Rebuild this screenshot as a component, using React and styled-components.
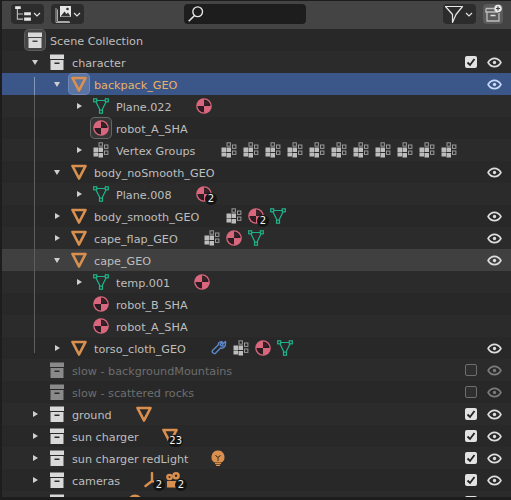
import React from 'react';
import styled, { createGlobalStyle } from 'styled-components';

const ORANGE = '#d98f4e';
const GREEN = '#1fb389';
const PINK = '#d8667c';

const CollectionIcon = ({ color = '#d9d9d9' }) => (
  <Svg viewBox="0 0 16 16">
    <path d="M1 .5h14v4.500H1z" fill={color} />
    <path fillRule="evenodd" d="M1.500 6H14.500V16H1.500zM5.500 8.500v1.500h5V8.500z" fill={color} />
  </Svg>
);

const MeshIcon = () => (
  <Svg viewBox="0 0 16 16">
    <path d="M1.500 2h13L8 14.500z" fill="none" stroke={ORANGE} strokeWidth="2.700" strokeLinejoin="round" />
  </Svg>
);

const MeshDataIcon = () => (
  <Svg viewBox="0 0 16 16" fill="none" stroke={GREEN} strokeWidth="1.200">
    <path d="M3.500 2.500h9M3 4l4 8M13 4l-4 8" />
    <rect x="0.700" y="0.800" width="3" height="3" />
    <rect x="12.300" y="0.800" width="3" height="3" />
    <rect x="6.500" y="12.200" width="3" height="3" />
  </Svg>
);

const MaterialIcon = () => (
  <Svg viewBox="0 0 16 16">
    <circle cx="8" cy="8" r="7.800" fill={PINK} />
    <path d="M8 1.500A6.500 6.500 0 0 1 14.500 8H8zM8 8v6.500A6.500 6.500 0 0 1 1.500 8z" fill="#2a1c20" />
    <path d="M8 2.500A5.500 5.500 0 0 1 13 6L8 7z" fill="#3a2328" />
  </Svg>
);

const VertexGroupIcon = () => (
  <Svg viewBox="0 0 16 16">
    <g fill="#bdbdbd">
      <rect x="0.500" y="5.500" width="4.500" height="4.500" />
      <rect x="0.500" y="10.500" width="4.500" height="4" />
      <rect x="5.500" y="5.500" width="4.500" height="4.500" />
      <rect x="5.500" y="11" width="4.500" height="4.500" />
    </g>
    <g fill="none" stroke="#9a9a9a" strokeWidth="1">
      <rect x="6" y="0.800" width="3.400" height="3.400" />
      <rect x="11.500" y="3" width="3.400" height="3.400" />
      <rect x="11.500" y="9" width="3.400" height="3.400" />
    </g>
  </Svg>
);

const WrenchIcon = () => (
  <Svg viewBox="0 0 16 16">
    <path
      d="M14.500 1.500l-2.800 2.600.4 1.700-1.800.2-1.200-1.200 2.400-2.800c-2-.8-4.500.6-4.300 3.100L1.500 10.500c-1.200 1.500 1.800 4.100 3 2.700l5-5.200c2.800 1 5.600-1.500 5-6.500z"
      fill="none"
      stroke="#5c87c9"
      strokeWidth="1.400"
      strokeLinejoin="round"
    />
  </Svg>
);

const BulbIcon = () => (
  <Svg viewBox="0 0 16 16">
    <path d="M8 .5a6.500 6.500 0 0 0-3.500 12h7A6.500 6.500 0 0 0 8 .5z" fill={ORANGE} />
    <rect x="5" y="13" width="6" height="1.200" fill={ORANGE} />
    <rect x="6" y="14.800" width="4" height="1.200" fill={ORANGE} />
    <path d="M5.500 5l1.500 2h2l1.500-2M8 7v4" fill="none" stroke="#4a3220" strokeWidth="1" />
  </Svg>
);

const EmptyIcon = () => (
  <Svg viewBox="0 0 16 16">
    <path d="M8 1V9M8 9l-6.500 5M8 9l7 3.500" fill="none" stroke={ORANGE} strokeWidth="2.400" strokeLinecap="round" />
  </Svg>
);

const CameraIcon = () => (
  <Svg viewBox="0 0 16 16">
    <circle cx="3.500" cy="5" r="3.300" fill={ORANGE} />
    <circle cx="10" cy="3.800" r="3.800" fill={ORANGE} />
    <circle cx="3.500" cy="5" r="1" fill="#3a2a1c" />
    <circle cx="10" cy="3.800" r="1.200" fill="#3a2a1c" />
    <path d="M1 9h10v6.500H1zM12 10.500l3-1v5l-3-1z" fill={ORANGE} />
  </Svg>
);

const SphereIcon = () => (
  <Svg viewBox="0 0 16 16">
    <circle cx="8" cy="8" r="7.500" fill={ORANGE} />
  </Svg>
);

const EyeIcon = ({ color }) => (
  <EyeSvg viewBox="0 0 16 12" fill="none" stroke={color} strokeWidth="1.800">
    <path d="M1 6c3.500-6 10.500-6 14 0-3.500 6-10.500 6-14 0z" strokeLinejoin="round" />
    <circle cx="8" cy="6" r="1.800" fill={color} stroke="none" />
  </EyeSvg>
);

const Chevron = () => (
  <ChevronSvg viewBox="0 0 8 5">
    <path d="M1 1l3 3 3-3" fill="none" stroke="#e6e6e6" strokeWidth="1.100" />
  </ChevronSvg>
);

const INLINE_ICONS = {
  wrench: WrenchIcon,
  vgroup: VertexGroupIcon,
  material: MaterialIcon,
  meshData: MeshDataIcon,
  mesh: MeshIcon,
  bulb: BulbIcon,
  empty: EmptyIcon,
  camera: CameraIcon,
  sphere: SphereIcon,
};

const MAIN_ICONS = {
  collection: CollectionIcon,
  mesh: MeshIcon,
  meshData: MeshDataIcon,
  material: MaterialIcon,
  vgroup: VertexGroupIcon,
};

const i = (kind, badge) => ({ kind, badge });
const many = (kind, n) => Array.from({ length: n }, () => i(kind));

const rows = [
  { depth: 0, icon: 'collection', name: 'Scene Collection', framed: 'scene' },
  { depth: 1, arrow: 'open', icon: 'collection', name: 'character', check: true, eye: true },
  { depth: 2, arrow: 'open', icon: 'mesh', name: 'backpack_GEO', state: 'selected', eye: true, framed: 'selected', line: 'full' },
  { depth: 3, arrow: 'closed', icon: 'meshData', name: 'Plane.022', at: 196, inline: [i('material')], line: 'full' },
  { depth: 3, icon: 'material', name: 'robot_A_SHA', framed: 'data', line: 'full' },
  { depth: 3, arrow: 'closed', icon: 'vgroup', name: 'Vertex Groups', at: 221, inline: many('vgroup', 11), line: 'full' },
  { depth: 2, arrow: 'open', icon: 'mesh', name: 'body_noSmooth_GEO', eye: true, line: 'full' },
  { depth: 3, arrow: 'closed', icon: 'meshData', name: 'Plane.008', at: 196, inline: [i('material', '2')], line: 'full' },
  { depth: 2, arrow: 'closed', icon: 'mesh', name: 'body_smooth_GEO', at: 226, inline: [i('vgroup'), i('material', '2'), i('meshData')], eye: true, line: 'full' },
  { depth: 2, arrow: 'closed', icon: 'mesh', name: 'cape_flap_GEO', at: 204, inline: [i('vgroup'), i('material'), i('meshData')], eye: true, line: 'full' },
  { depth: 2, arrow: 'open', icon: 'mesh', name: 'cape_GEO', state: 'active', eye: true, line: 'full' },
  { depth: 3, arrow: 'closed', icon: 'meshData', name: 'temp.001', at: 194, inline: [i('material')], line: 'full' },
  { depth: 3, icon: 'material', name: 'robot_B_SHA', line: 'full' },
  { depth: 3, icon: 'material', name: 'robot_A_SHA', line: 'full' },
  { depth: 2, arrow: 'closed', icon: 'mesh', name: 'torso_cloth_GEO', at: 211, inline: [i('wrench'), i('vgroup'), i('material'), i('meshData')], eye: true, line: 'end' },
  { depth: 1, icon: 'collection', name: 'slow - backgroundMountains', dim: true, check: false, eye: true },
  { depth: 1, icon: 'collection', name: 'slow - scattered rocks', dim: true, check: false, eye: true },
  { depth: 1, arrow: 'closed', icon: 'collection', name: 'ground', at: 136, inline: [i('mesh')], check: true, eye: true },
  { depth: 1, arrow: 'closed', icon: 'collection', name: 'sun charger', at: 162, inline: [i('mesh', '23')], check: true, eye: true },
  { depth: 1, arrow: 'closed', icon: 'collection', name: 'sun charger redLight', at: 210, inline: [i('bulb')], check: true, eye: true },
  { depth: 1, arrow: 'closed', icon: 'collection', name: 'cameras', at: 144, inline: [i('empty', '2'), i('camera', '2')], check: true, eye: true },
  { depth: 1, arrow: 'closed', icon: 'collection', at: 127, inline: [i('sphere')], check: true, eye: true },
];

const eyeColor = (row) => {
  if (row.state === 'selected') return '#c9daf8';
  return row.dim ? '#7c7c7c' : '#dedede';
};

function OutlinerRow({ row, index }) {
  const Main = MAIN_ICONS[row.icon];
  const textX = 27 + 22 * row.depth + 23;
  return (
    <Row $depth={row.depth} $odd={index % 2 === 1} $state={row.state} $line={row.line}>
      <ArrowSlot>
        {row.arrow && <Arrow $open={row.arrow === 'open'} />}
      </ArrowSlot>
      <MainIcon $framed={row.framed} $dim={row.dim}>
        <Main color={row.dim ? '#8a8a8a' : undefined} />
      </MainIcon>
      <Name $width={row.at ? row.at - textX : undefined} $state={row.state} $dim={row.dim}>
        {row.name}
      </Name>
      {row.inline && (
        <InlineIcons>
          {row.inline.map((item, n) => {
            const Icon = INLINE_ICONS[item.kind];
            return (
              <IconWrap key={n}>
                <Icon />
                {item.badge && <Badge>{item.badge}</Badge>}
              </IconWrap>
            );
          })}
        </InlineIcons>
      )}
      <Restrict>
        {row.check !== undefined && <Check $on={row.check}>{row.check && <CheckMark />}</Check>}
        {row.eye && <EyeIcon color={eyeColor(row)} />}
      </Restrict>
    </Row>
  );
}

const CheckMark = () => (
  <svg viewBox="0 0 12 12" width="12" height="12">
    <path d="M2.500 6.500l2.500 2.500 4.500-6" fill="none" stroke="#222" strokeWidth="1.800" />
  </svg>
);

export default function App() {
  return (
    <>
      <GlobalStyle />
      <Panel>
        <Header>
          <HeaderButton>
            <svg viewBox="0 0 16 16" width="18" height="18">
              <path d="M1 1h5v2.500H1zM9 6.500h6V9H9zM9 11h6v3H9z" fill="#e6e6e6" />
              <path d="M3 3.500v9h5M3 8h5" fill="none" stroke="#bcbcbc" strokeWidth="1" />
            </svg>
            <Chevron />
          </HeaderButton>
          <HeaderButton>
            <svg viewBox="0 0 18 18" width="18" height="18">
              <path d="M3 4.500v12h12M1.500 3v14.500h14" fill="none" stroke="#aaa" strokeWidth="1" transform="translate(0.500 0)" />
              <path d="M6 1h11v11H6z" fill="#e6e6e6" />
              <path d="M6.500 11.500l4-5 2 2.500 1.500-1.500 2.500 4z" fill="#333" />
              <circle cx="13.500" cy="4" r="1.300" fill="#333" />
            </svg>
            <Chevron />
          </HeaderButton>
          <SearchField>
            <svg viewBox="0 0 16 16" width="18" height="18">
              <circle cx="9.500" cy="6" r="4.300" fill="none" stroke="#e6e6e6" strokeWidth="1.200" />
              <path d="M6.500 9.500L1.500 14.500" stroke="#e6e6e6" strokeWidth="1.400" />
            </svg>
          </SearchField>
          <FilterButton>
            <svg viewBox="0 0 20 20" width="20" height="20">
              <path d="M1.500 2.500h17l-6.500 8-3.500 8v-8z" fill="none" stroke="#e6e6e6" strokeWidth="1.200" strokeLinejoin="round" />
            </svg>
            <Chevron />
          </FilterButton>
          <NewCollection>
            <svg viewBox="0 0 20 20" width="20" height="20">
              <path d="M3 4.500h8M3 4.500V8h12M4 8v9h12V9" fill="none" stroke="#bdbdbd" strokeWidth="1.300" />
              <path d="M7.500 11.500h5" stroke="#dcdcdc" strokeWidth="1.500" />
              <circle cx="15" cy="4.500" r="3.800" fill="#e8e8e8" />
              <path d="M15 2.500v4M13 4.500h4" stroke="#444" strokeWidth="1.200" />
            </svg>
          </NewCollection>
        </Header>
        <List>
          {rows.map((row, index) => (
            <OutlinerRow key={index} row={row} index={index} />
          ))}
        </List>
      </Panel>
    </>
  );
}

const GlobalStyle = createGlobalStyle`
  html, body {
    margin: 0;
    background: #1d1d1d;
  }
`;

const Panel = styled.div`
  width: 511px;
  height: 500px;
  box-sizing: border-box;
  border-left: 2px solid #1d1d1d;
  border-top: 1px solid #1d1d1d;
  padding-bottom: 3px;
  display: flex;
  flex-direction: column;
  overflow: hidden;
  font-family: 'DejaVu Sans', sans-serif;
  font-size: 11.2px;
`;

const Header = styled.div`
  height: 28px;
  flex: none;
  display: flex;
  align-items: center;
  gap: 7px;
  padding: 0 8px 2px 9px;
  box-sizing: border-box;
  background: #444444;
`;

const HeaderButton = styled.div`
  width: 33px;
  height: 20px;
  box-sizing: border-box;
  padding-left: 3px;
  display: flex;
  align-items: center;
  gap: 1px;
  background: #2c2c2c;
  border-radius: 4px;
`;

const SearchField = styled.div`
  width: 122px;
  height: 20px;
  margin-left: 93px;
  margin-right: 130px;
  padding-left: 3px;
  box-sizing: border-box;
  display: flex;
  align-items: center;
  background: #1d1d1d;
  border-radius: 4px;
`;

const FilterButton = styled(HeaderButton)`
  padding-left: 1px;
  gap: 1px;
`;

const NewCollection = styled.div`
  width: 20px;
  height: 20px;
  display: flex;
  align-items: center;
  justify-content: center;
  background: #5a5a5a;
  border-radius: 4px;
`;

const List = styled.div`
  flex: 1;
  min-height: 0;
  overflow: hidden;
  background: #282828;
`;

const rowBackground = ({ $state, $odd }) => {
  if ($state === 'selected') return '#3b5689';
  if ($state === 'active') return '#404040';
  return $odd ? '#2b2b2b' : '#282828';
};

const Row = styled.div`
  position: relative;
  height: 22px;
  display: flex;
  align-items: center;
  box-sizing: border-box;
  padding-left: ${({ $depth }) => 3 + 22 * $depth}px;
  background: ${rowBackground};

  &::before {
    content: ${({ $line }) => ($line ? "''" : 'none')};
    position: absolute;
    left: 32px;
    top: ${({ $state }) => ($state === 'selected' ? '4px' : '0')};
    bottom: ${({ $line }) => ($line === 'end' ? '6px' : '0')};
    width: 1px;
    background: ${({ $state }) => ($state === 'selected' ? '#8496b8' : '#5e5e5e')};
  }
`;

const ArrowSlot = styled.div`
  width: 16px;
  margin-right: 6px;
  flex: none;
  display: flex;
  align-items: center;
  justify-content: center;
`;

const Arrow = styled.div`
  width: 0;
  height: 0;
  ${({ $open }) =>
    $open
      ? `
    border-left: 3.500px solid transparent;
    border-right: 3.500px solid transparent;
    border-top: 5.500px solid #cfcfcf;
  `
      : `
    border-top: 3.500px solid transparent;
    border-bottom: 3.500px solid transparent;
    border-left: 5.500px solid #cfcfcf;
  `}
`;

const frameStyles = {
  scene: 'background: #454545; box-shadow: 0 0 0 2px #454545, 0 0 0 3px #5c5c5c;',
  selected: 'background: #5a74a4; box-shadow: 0 0 0 2px #5a74a4, 0 0 0 3px #6f88b6;',
  data: 'background: #353535; box-shadow: 0 0 0 2px #353535, 0 0 0 3px #666666;',
};

const MainIcon = styled.div`
  width: 16px;
  height: 16px;
  flex: none;
  margin-right: 7px;
  border-radius: 2px;
  ${({ $framed }) => frameStyles[$framed] || ''}
`;

const nameColor = ({ $state, $dim }) => {
  if ($state === 'selected') return '#ecb15f';
  return $dim ? '#6e6e6e' : '#bebebe';
};

const Name = styled.span`
  flex: none;
  white-space: nowrap;
  padding-top: 3px;
  color: ${nameColor};
  ${({ $width }) => ($width ? `width: ${$width}px;` : '')}
`;

const InlineIcons = styled.div`
  display: flex;
  gap: 6px;
`;

const IconWrap = styled.div`
  position: relative;
  width: 16px;
  height: 16px;
`;

const Badge = styled.span`
  position: absolute;
  right: -5px;
  bottom: -3px;
  min-width: 12px;
  height: 12px;
  padding: 0 1px;
  box-sizing: border-box;
  border-radius: 6px;
  background: #141414;
  color: #f0f0f0;
  font-size: 10px;
  line-height: 12px;
  text-align: center;
`;

const Restrict = styled.div`
  position: absolute;
  right: 9px;
  top: 0;
  height: 22px;
  display: flex;
  align-items: center;
  justify-content: flex-end;
  gap: 10px;
`;

const Check = styled.div`
  width: 12px;
  height: 12px;
  box-sizing: border-box;
  border-radius: 2px;
  background: ${({ $on }) => ($on ? '#e2e2e2' : '#2f2f2f')};
  border: ${({ $on }) => ($on ? 'none' : '1px solid #6e6e6e')};
  display: flex;
`;

const Svg = styled.svg`
  display: block;
  width: 16px;
  height: 16px;
`;

const EyeSvg = styled.svg`
  display: block;
  width: 15px;
  height: 11px;
`;

const ChevronSvg = styled.svg`
  display: block;
  width: 8px;
  height: 5px;
`;
